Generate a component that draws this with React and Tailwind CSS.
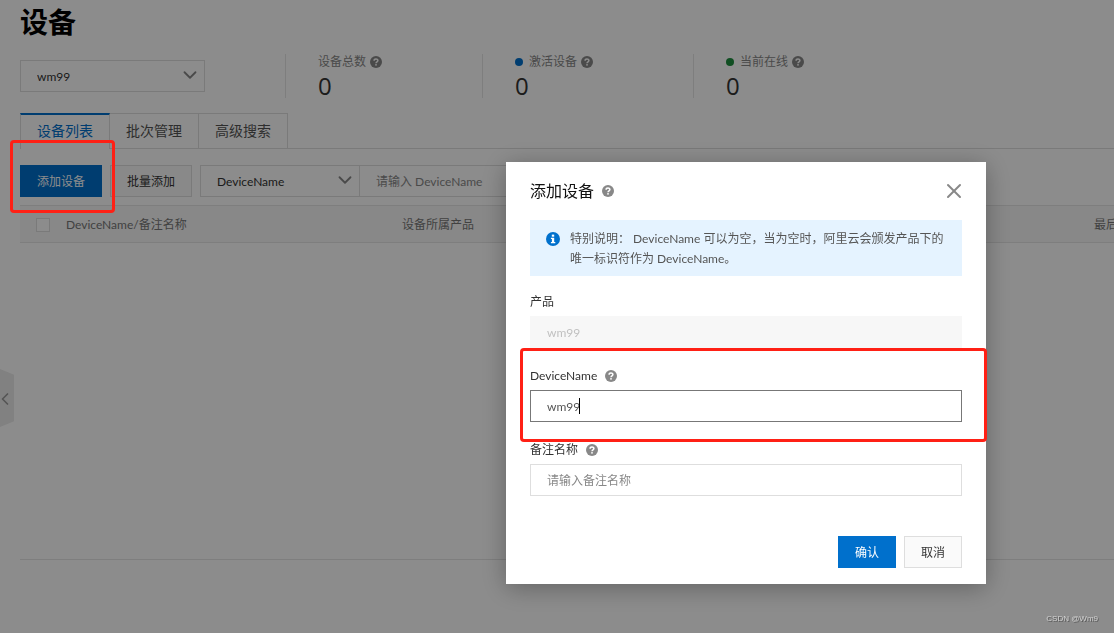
import { useState } from "react";
import { ChevronDown, ChevronLeft, X } from "lucide-react";

const stats = [
  { label: "设备总数", value: 0, dot: null },
  { label: "激活设备", value: 0, dot: "bg-[#0070cc]" },
  { label: "当前在线", value: 0, dot: "bg-[#1e8e3e]" },
];

const tabs = ["设备列表", "批次管理", "高级搜索"];

const HelpIcon = () => (
  <svg viewBox="0 0 12 12" className="size-3 shrink-0" aria-hidden="true">
    <circle cx="6" cy="6" r="6" fill="#888888" />
    <path
      d="M4.1 4.7C4.1 2.6 7.9 2.6 7.9 4.6C7.9 5.9 6 5.8 6 7.3"
      fill="none"
      stroke="#fff"
      strokeWidth="1.5"
    />
    <rect x="5.2" y="8.1" width="1.6" height="1.5" fill="#fff" />
  </svg>
);

const InfoIcon = () => (
  <svg viewBox="0 0 14 14" className="mt-[3px] size-3.5 shrink-0" aria-hidden="true">
    <circle cx="7" cy="7" r="7" fill="#0070cc" />
    <rect x="5.8" y="2.6" width="2.4" height="2.1" fill="#fff" />
    <path d="M4.9 5.7h3.3v4.2h1.1v1.4H4.9V9.9h1V7.1h-1z" fill="#fff" />
  </svg>
);

const Button = ({ variant = "normal", children }) => (
  <button
    type="button"
    className={
      variant === "primary"
        ? "h-8 border border-[#0070cc] bg-[#0070cc] px-4 pt-0.5 text-xs text-white"
        : "h-8 border border-[#dedede] bg-[#fafafa] px-4 pt-0.5 text-xs text-[#333333]"
    }
  >
    {children}
  </button>
);

const Select = ({ label, options, className }) => (
  <div className={`relative h-8 ${className}`}>
    <select
      aria-label={label}
      className="h-full w-full appearance-none border border-[#dedede] bg-white px-4 pt-0.5 text-xs text-[#333333] outline-none"
    >
      {options.map((option) => (
        <option key={option}>{option}</option>
      ))}
    </select>
    <ChevronDown
      className="pointer-events-none absolute top-1 right-1 size-[22px] text-[#888888]"
      strokeWidth={2}
    />
  </div>
);

const Stats = () => (
  <div className="ml-20 flex">
    {stats.map(({ label, value, dot }) => (
      <div key={label} className="h-11 border-l border-[#e5e5e5] pr-[100px] pl-8">
        <div className="flex h-4 items-center text-xs text-[#888888]">
          {dot && <span className={`mr-1.5 size-2 rounded-full ${dot}`} />}
          <span className="mr-1 whitespace-nowrap">{label}</span>
          <HelpIcon />
        </div>
        <div className="mt-1 font-['Open_Sans',sans-serif] text-2xl leading-6 text-[#333333]">
          {value}
        </div>
      </div>
    ))}
  </div>
);

const Tabs = () => {
  const [active, setActive] = useState(0);

  return (
    <div className="mt-[15px] flex h-9 border-b border-[#dedede]">
      {tabs.map((tab, i) => (
        <button
          key={tab}
          type="button"
          onClick={() => setActive(i)}
          className={
            i === active
              ? "h-9 border-x border-t-2 border-x-[#dedede] border-t-[#0070cc] bg-white px-4 pb-0.5 text-sm text-[#0070cc]"
              : "h-9 border-t border-r border-b border-[#dedede] px-4 text-sm text-[#555555]"
          }
        >
          {tab}
        </button>
      ))}
    </div>
  );
};

const Toolbar = () => (
  <div className="mt-4 flex gap-2">
    <div className="relative">
      <Button variant="primary">添加设备</Button>
      {/* Step marker */}
      <div className="pointer-events-none absolute -top-[25px] -right-[13px] -bottom-4 -left-[10px] z-20 rounded-[4px] border-3 border-[#ff2015]" />
    </div>
    <Button>批量添加</Button>
    <div className="flex">
      <Select label="搜索类型" options={["DeviceName", "备注名称"]} className="w-40" />
      <input
        aria-label="DeviceName"
        placeholder="请输入 DeviceName"
        className="-ml-px h-8 w-60 border border-[#dedede] bg-white px-4 text-xs outline-none placeholder:text-[#888888]"
      />
    </div>
  </div>
);

const DeviceTable = () => (
  <div className="mt-2 overflow-hidden border-b border-[#e5e5e5]">
    <table className="w-[1300px] table-fixed border-collapse text-left text-xs">
      <thead>
        <tr className="h-[37px] border-y border-[#e5e5e5] bg-[#f7f7f7] text-[#777777]">
          <th className="w-[46px] pt-0.5 pl-4">
            <input
              type="checkbox"
              aria-label="全选"
              className="block size-3.5 appearance-none border border-[#dedede] bg-white"
            />
          </th>
          <th className="w-[336px] pt-0.5 font-normal">DeviceName/备注名称</th>
          <th className="w-[692px] pt-0.5 font-normal">设备所属产品</th>
          <th className="pt-0.5 font-normal">最后上线时间</th>
        </tr>
      </thead>
      <tbody>
        <tr className="h-[316px]">
          <td colSpan={4} />
        </tr>
      </tbody>
    </table>
  </div>
);

const Field = ({ id, label, help, children }) => (
  <div className="relative">
    <div className="mb-1 flex h-5 items-center gap-2 text-xs text-[#333333]">
      <label htmlFor={id}>{label}</label>
      {help && <HelpIcon />}
    </div>
    {children}
  </div>
);

const AddDeviceDialog = () => (
  <div
    role="dialog"
    aria-labelledby="dialog-title"
    className="w-[480px] bg-white px-6 pb-4 shadow-[0_4px_24px_rgba(0,0,0,0.3)]"
  >
    <header className="flex h-[58px] items-center">
      <h2 id="dialog-title" className="mr-2 text-base text-[#111111]">
        添加设备
      </h2>
      <HelpIcon />
      <button type="button" aria-label="关闭" className="-mr-1 ml-auto">
        <X className="size-6 text-[#888888]" strokeWidth={2} />
      </button>
    </header>

    <div className="flex gap-2.5 bg-[#e5f3ff] px-4 pt-[9px] pb-[7px]">
      <InfoIcon />
      <p className="text-xs leading-5 text-[#555555]">
        特别说明： DeviceName 可以为空，当为空时，阿里云会颁发产品下的唯一标识符作为
        DeviceName。
      </p>
    </div>

    <form className="mt-4 flex flex-col gap-[18px]" onSubmit={(e) => e.preventDefault()}>
      <Field id="product" label="产品">
        <input
          id="product"
          disabled
          defaultValue="wm99"
          className="block h-8 w-full border border-[#f7f7f7] bg-[#f7f7f7] px-4 text-xs text-[#c1c1c1]"
        />
      </Field>

      <Field id="device-name" label="DeviceName" help>
        <div className="relative">
          <input
            id="device-name"
            defaultValue="wm99"
            className="block h-8 w-full border border-[#777777] px-4 text-xs text-[#555555] caret-transparent outline-none"
          />
          <span className="absolute top-2 left-[49px] h-4 w-px bg-black" />
        </div>
        <div className="pointer-events-none absolute -top-[18px] -right-[25px] -bottom-5 -left-[10px] z-20 rounded-[4px] border-3 border-[#ff2015]" />
      </Field>

      <Field id="remark" label="备注名称" help>
        <input
          id="remark"
          placeholder="请输入备注名称"
          className="block h-8 w-full border border-[#dedede] px-4 text-xs outline-none placeholder:text-[#888888]"
        />
      </Field>
    </form>

    <footer className="mt-10 flex justify-end gap-2">
      <Button variant="primary">确认</Button>
      <Button>取消</Button>
    </footer>
  </div>
);

const App = () => {
  return (
    <div className="relative min-h-screen overflow-hidden bg-white font-['Lato','Noto_Sans_CJK_SC',sans-serif]">
      <main className="pl-5">
        <h1 className="h-11 text-[28px] leading-[44px] font-bold text-black">设备</h1>
        <div className="mt-[10px] flex items-center">
          <Select label="产品" options={["wm99"]} className="w-[185px]" />
          <Stats />
        </div>
        <Tabs />
        <Toolbar />
        <DeviceTable />
      </main>

      {/* Sidebar handle */}
      <button
        type="button"
        aria-label="展开侧栏"
        className="absolute top-[369px] left-0 flex h-[58px] w-3.5 items-center justify-center bg-[#ebebeb] pt-0.5 [clip-path:polygon(0_0,100%_10%,100%_90%,0_100%)]"
      >
        <ChevronLeft className="mr-1 size-5 shrink-0 text-[#999999]" />
      </button>

      <div className="fixed inset-0 z-10 flex items-start justify-end bg-black/45 pt-[162px] pr-32">
        <AddDeviceDialog />
      </div>

      <div className="fixed right-4 bottom-2 z-20 font-['Liberation_Sans',sans-serif] text-[8px] leading-3 text-[#d0d0d0] [text-shadow:1px_1px_0_#555]">
        CSDN @Wm9
      </div>
    </div>
  );
};

export default App;
